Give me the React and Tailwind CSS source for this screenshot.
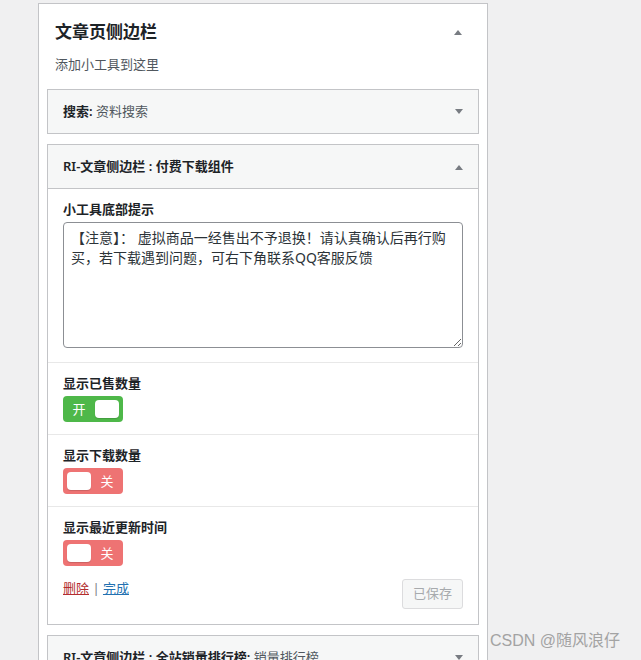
import React, { useState } from 'react';

const font = "font-['Segoe_UI','Noto_Sans','Noto_Sans_CJK_SC',sans-serif]";

function Arrow({ up }) {
  return (
    <svg width="8" height="5" viewBox="0 0 8 5" className="shrink-0">
      {up ? <path d="M0 5 L4 0 L8 5 Z" fill="#787c82" /> : <path d="M0 0 L8 0 L4 5 Z" fill="#787c82" />}
    </svg>
  );
}

function WidgetHead({ title, sub, open }) {
  return (
    <div className={`bg-[#f6f7f7] flex items-center justify-between pl-[15px] pr-[15px] ${open ? 'h-[44px] pt-[1px] border-b border-[#c3c4c7]' : 'h-[43px]'}`}>
      <div className="text-[13px] text-[#1d2327]">
        <span className="font-semibold">{title}</span>
        {sub && <span className="text-[#50575e]"> {sub}</span>}
      </div>
      <Arrow up={open} />
    </div>
  );
}

function Toggle({ on, onClick }) {
  return (
    <button
      onClick={onClick}
      className={`w-[60px] h-[26px] rounded-[4px] flex items-center justify-between px-[4px] ${on ? 'bg-[#4eb849]' : 'bg-[#ee7373]'}`}
    >
      {on ? (
        <>
          <span className="w-[24px] text-center text-[13px] text-white leading-none">开</span>
          <span className="w-[24px] h-[18px] rounded-[4px] bg-white shadow-[0_1px_1px_rgba(0,0,0,0.15)]" />
        </>
      ) : (
        <>
          <span className="w-[24px] h-[18px] rounded-[4px] bg-white shadow-[0_1px_1px_rgba(0,0,0,0.15)]" />
          <span className="w-[24px] text-center text-[13px] text-white leading-none">关</span>
        </>
      )}
    </button>
  );
}

export default function App() {
  const [sold, setSold] = useState(true);
  const [downloads, setDownloads] = useState(false);
  const [updated, setUpdated] = useState(false);

  return (
    <div className={`min-h-screen bg-[#f0f0f1] relative overflow-hidden h-[660px] ${font}`}>
      <div className="pt-[3px] pl-[38px]">
        <div className="w-[450px] bg-white border border-[#c3c4c7] px-[8px] pb-[40px]">
          {/* 侧边栏标题 */}
          <div className="flex items-center justify-between pl-[8px] pr-[17px] pt-[16px]">
            <h2 className="text-[17px] leading-[24px] font-semibold text-[#1d2327]">文章页侧边栏</h2>
            <Arrow up />
          </div>
          <p className="pl-[8px] mt-[10px] text-[13px] leading-[20px] text-[#50575e]">添加小工具到这里</p>

          {/* 搜索 */}
          <div className="mt-[15px] border border-[#c3c4c7]">
            <WidgetHead title="搜索:" sub="资料搜索" />
          </div>

          {/* 付费下载组件 */}
          <div className="mt-[10px] border border-[#c3c4c7] bg-white">
            <WidgetHead title="RI-文章侧边栏 : 付费下载组件" open />
            <div className="px-[15px] pt-[11px] pb-[14px]">
              <label className="block text-[13px] leading-[18px] font-semibold text-[#1d2327]">小工具底部提示</label>
              <textarea
                className="mt-[4px] block w-[400px] h-[126px] border border-[#8c8f94] rounded-[4px] pl-[7px] pr-[3px] py-[5px] text-[14px] leading-[20px] text-[#2c3338] resize-y"
                defaultValue="【注意】： 虚拟商品一经售出不予退换！请认真确认后再行购买，若下载遇到问题，可右下角联系QQ客服反馈"
              />
            </div>

            <div className="border-t border-[#e8e8e8] px-[15px] pt-[11px] pb-[12px]">
              <div className="text-[13px] leading-[18px] font-semibold text-[#1d2327] mb-[4px]">显示已售数量</div>
              <Toggle on={sold} onClick={() => setSold(!sold)} />
            </div>
            <div className="border-t border-[#e8e8e8] px-[15px] pt-[11px] pb-[12px]">
              <div className="text-[13px] leading-[18px] font-semibold text-[#1d2327] mb-[4px]">显示下载数量</div>
              <Toggle on={downloads} onClick={() => setDownloads(!downloads)} />
            </div>
            <div className="border-t border-[#e8e8e8] px-[15px] pt-[11px] pb-[12px]">
              <div className="text-[13px] leading-[18px] font-semibold text-[#1d2327] mb-[4px]">显示最近更新时间</div>
              <Toggle on={updated} onClick={() => setUpdated(!updated)} />
            </div>

            <div className="flex items-start justify-between px-[15px] pb-[15px]">
              <div className="text-[13px] leading-[20px]">
                <a href="#" className="text-[#b32d2e] underline">删除</a>
                <span className="text-[#787c82]"> | </span>
                <a href="#" className="text-[#2271b1] underline">完成</a>
              </div>
              <button disabled className="mt-[1px] h-[30px] px-[10px] text-[13px] text-[#a7aaad] bg-[#f6f7f7] border border-[#dcdcde] rounded-[3px]">
                已保存
              </button>
            </div>
          </div>

          {/* 全站销量排行榜 */}
          <div className="mt-[10px] border border-[#c3c4c7]">
            <WidgetHead title="RI-文章侧边栏 : 全站销量排行榜:" sub="销量排行榜" />
          </div>
        </div>
      </div>

      <div className="absolute left-[490px] top-[630px] text-[16px] leading-[22px] text-[#a3a3a3] font-['Liberation_Sans','Noto_Sans_CJK_SC',sans-serif]">
        CSDN @随风浪仔
      </div>
    </div>
  );
}
